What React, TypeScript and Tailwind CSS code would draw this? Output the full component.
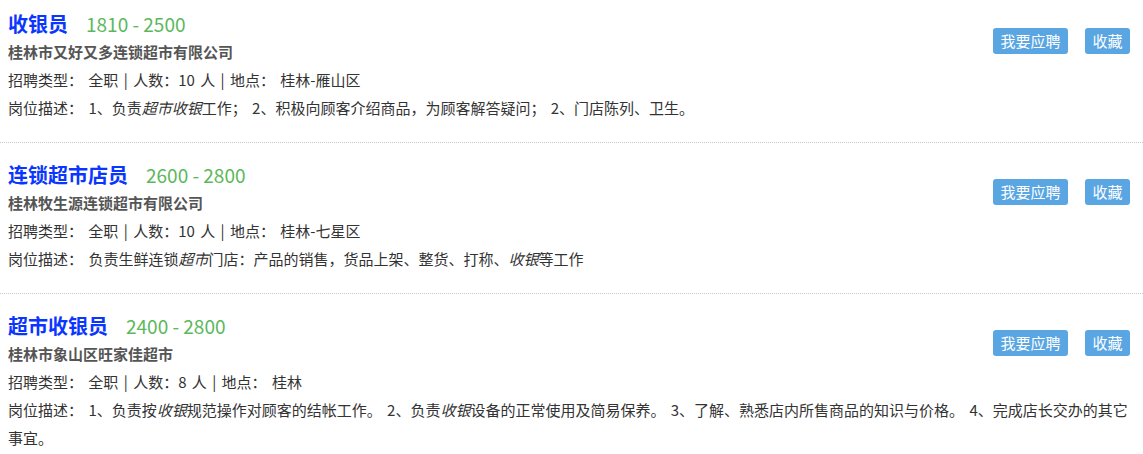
import React from "react";

type Part = { t: string; em?: boolean };

type Job = {
  title: string;
  salary: string;
  company: string;
  kind: string;
  count: string;
  place: string;
  desc: Part[];
};

const jobs: Job[] = [
  {
    title: "收银员",
    salary: "1810 - 2500",
    company: "桂林市又好又多连锁超市有限公司",
    kind: "全职",
    count: "10",
    place: "桂林-雁山区",
    desc: [
      { t: "1、负责" },
      { t: "超市收银", em: true },
      { t: "工作； 2、积极向顾客介绍商品，为顾客解答疑问； 2、门店陈列、卫生。" },
    ],
  },
  {
    title: "连锁超市店员",
    salary: "2600 - 2800",
    company: "桂林牧生源连锁超市有限公司",
    kind: "全职",
    count: "10",
    place: "桂林-七星区",
    desc: [
      { t: "负责生鲜连锁" },
      { t: "超市", em: true },
      { t: "门店：产品的销售，货品上架、整货、打称、" },
      { t: "收银", em: true },
      { t: "等工作" },
    ],
  },
  {
    title: "超市收银员",
    salary: "2400 - 2800",
    company: "桂林市象山区旺家佳超市",
    kind: "全职",
    count: "8",
    place: "桂林",
    desc: [
      { t: "1、负责按" },
      { t: "收银", em: true },
      { t: "规范操作对顾客的结帐工作。 2、负责" },
      { t: "收银", em: true },
      { t: "设备的正常使用及简易保养。 3、了解、熟悉店内所售商品的知识与价格。 4、完成店长交办的其它事宜。" },
    ],
  },
];

const JobItem: React.FC<{ job: Job; first: boolean }> = ({ job, first }) => {
  return (
    <div
      className={
        "border-b border-dotted border-[#c8c8c8] pl-2 pr-[13px] pb-5 " +
        (first ? "pt-[10px]" : "pt-[18px]")
      }
    >
      <div className="flex items-start justify-between">
        <div>
          <div className="flex h-[28px] items-center">
            <span className="text-[20px] font-bold text-[#0a36ff]">{job.title}</span>
            <span className="ml-[18px] text-[19px] text-[#5cb85c]">{job.salary}</span>
          </div>
          <div className="flex h-[28px] items-center text-[15px] font-bold text-[#555]">
            {job.company}
          </div>
          <div className="flex h-[28px] items-center text-[15px] text-[#333] whitespace-pre [word-spacing:2px]">
            {`招聘类型： ${job.kind} | 人数：${job.count} 人 | 地点： ${job.place}`}
          </div>
        </div>
        <div className="mt-[18px] flex gap-[17px]">
          <button className="h-[26px] w-[75px] rounded-[3px] bg-[#5aa6e3] text-[15px] text-white">
            我要应聘
          </button>
          <button className="h-[26px] w-[45px] rounded-[3px] bg-[#5aa6e3] text-[15px] text-white">
            收藏
          </button>
        </div>
      </div>
      <div className="text-[15px] leading-[28px] text-[#333] [word-spacing:2px]">
        {"岗位描述： "}
        {job.desc.map((p, i) =>
          p.em ? (
            <em key={i} className="italic">
              {p.t}
            </em>
          ) : (
            <span key={i}>{p.t}</span>
          )
        )}
      </div>
    </div>
  );
};

const App: React.FC = () => {
  return (
    <div
      className="w-[1143px] bg-white"
      style={{ fontFamily: '"Noto Sans CJK SC", "Noto Sans", sans-serif' }}
    >
      {jobs.map((job, i) => (
        <JobItem key={i} job={job} first={i === 0} />
      ))}
    </div>
  );
};

export default App;
